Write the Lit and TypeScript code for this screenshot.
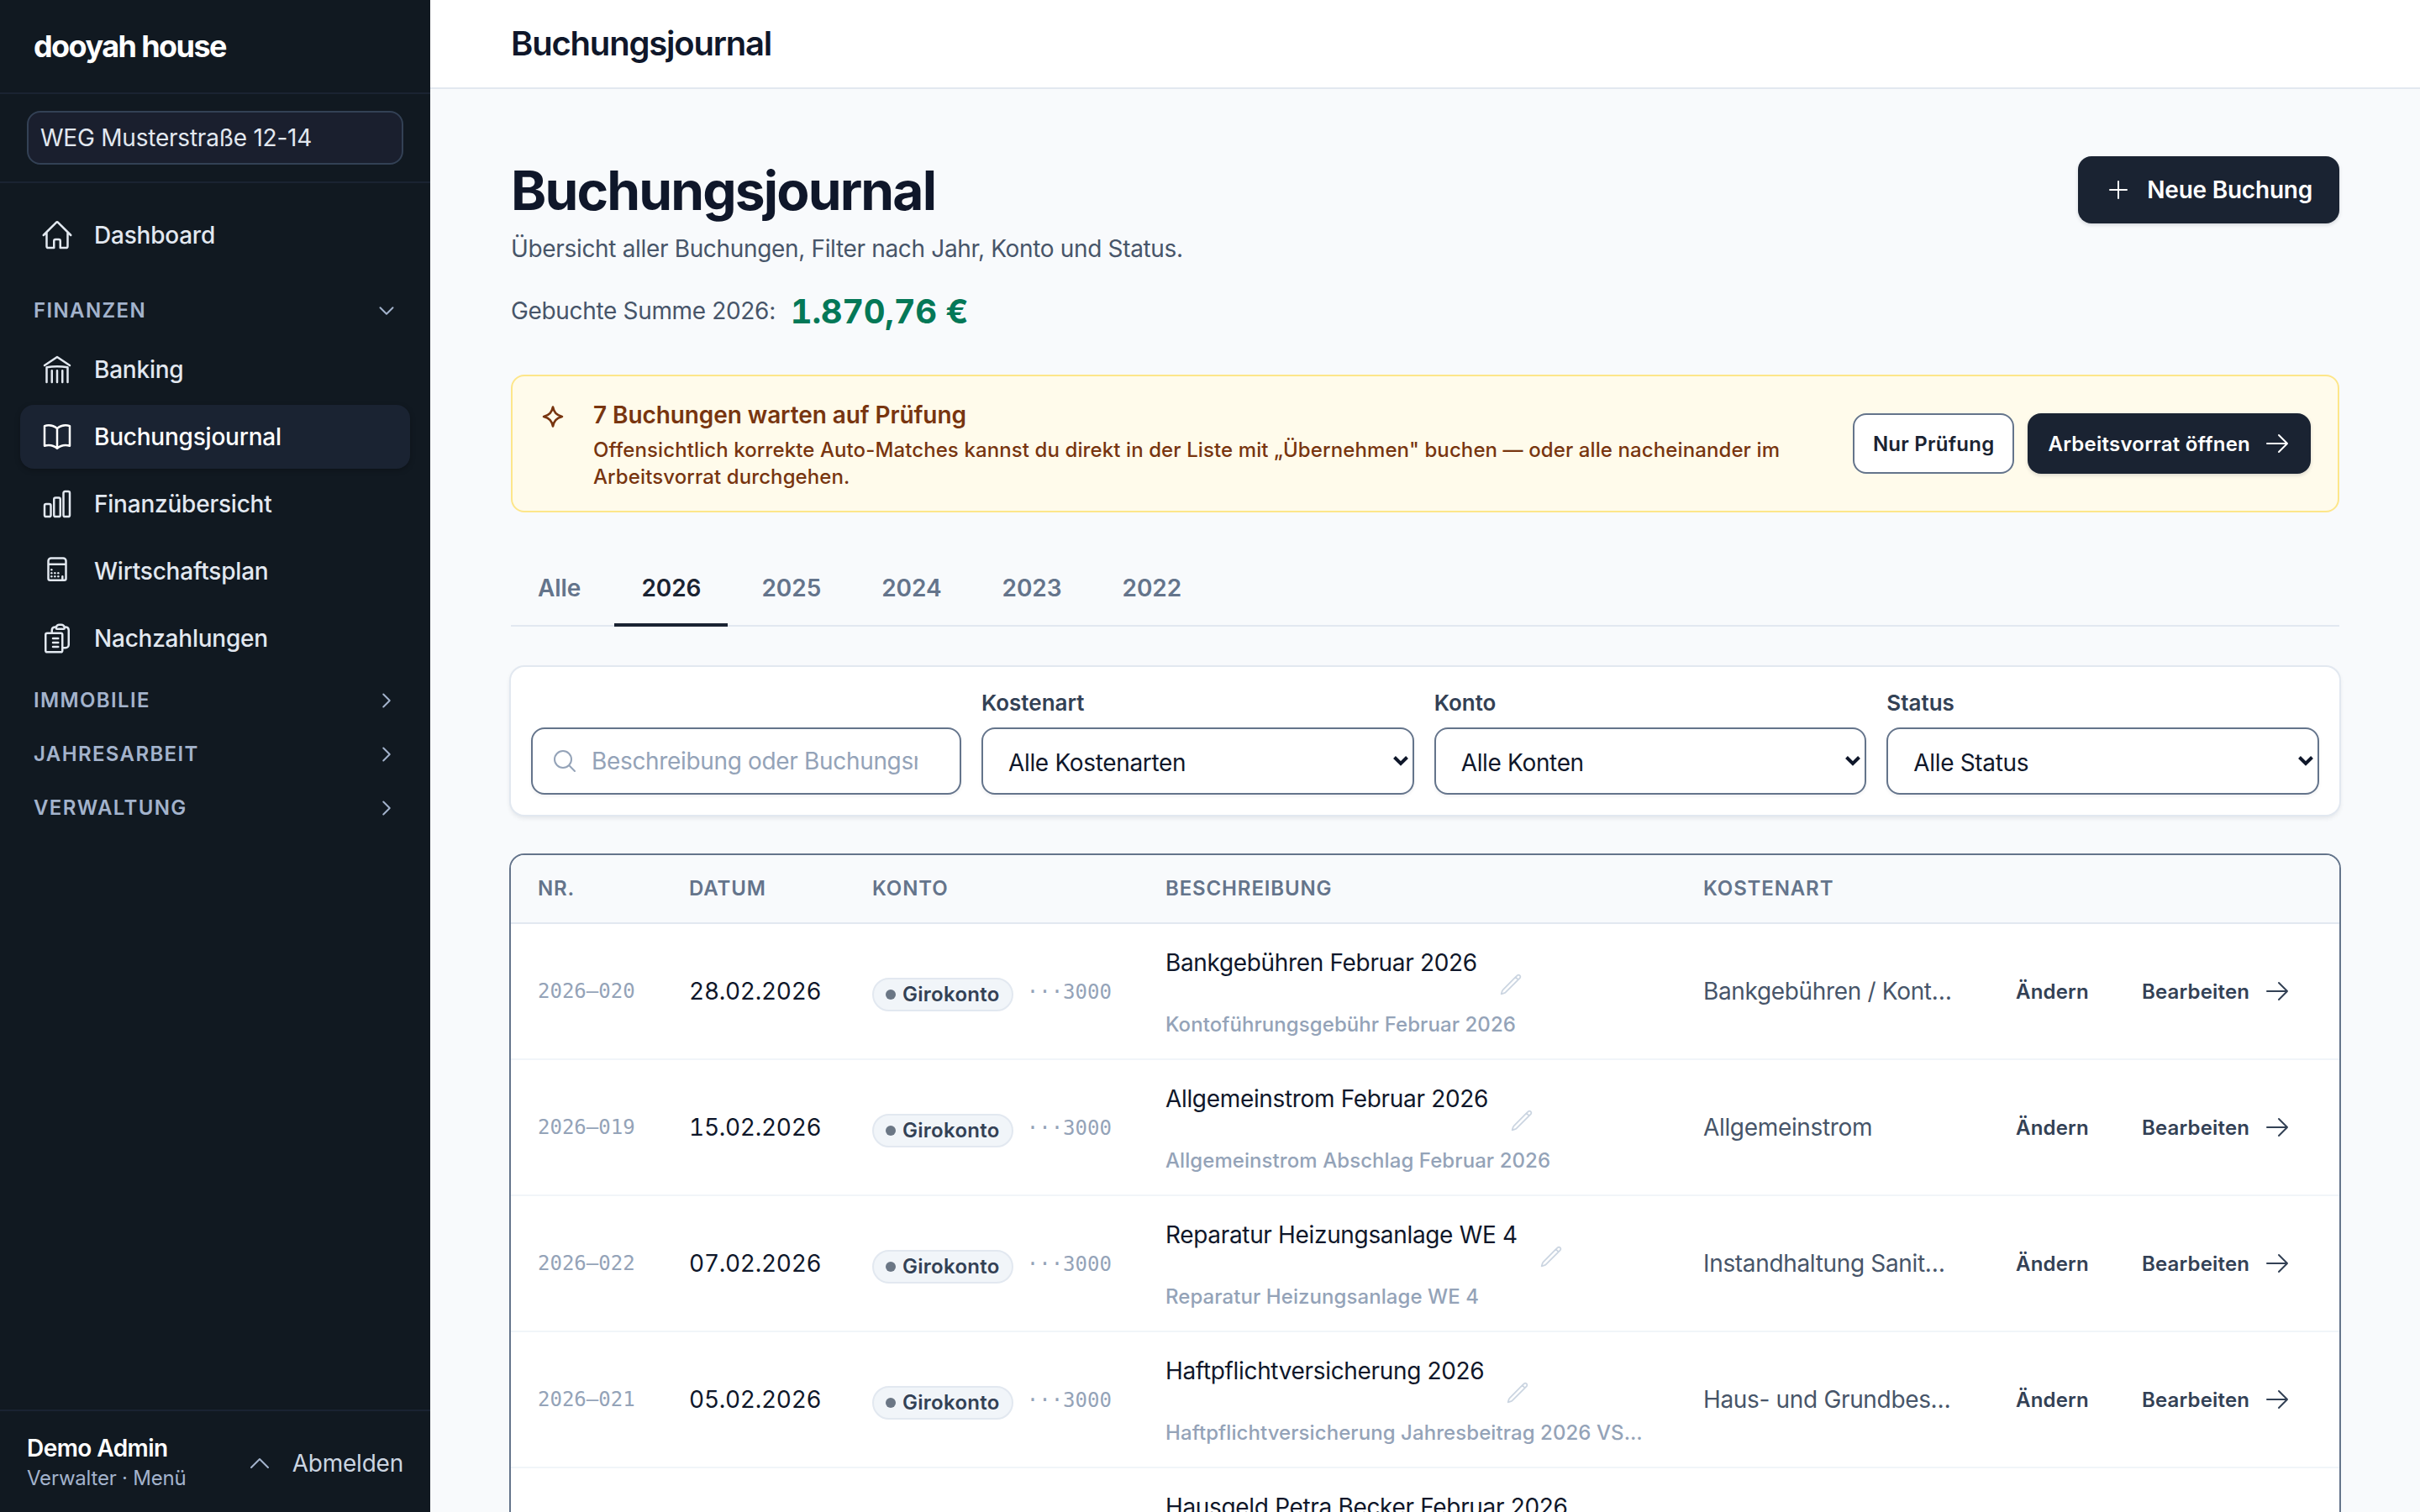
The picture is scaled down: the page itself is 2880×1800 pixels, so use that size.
import { LitElement, html, css, svg } from "lit";
import { customElement, property, state } from "lit/decorators.js";
import { classMap } from "lit/directives/class-map.js";

// Outline icons on a 24px grid
const ICONS: Record<string, string> = {
  home: "m2.25 12 8.954-8.955c.44-.439 1.152-.439 1.591 0L21.75 12M4.5 9.75v10.125c0 .621.504 1.125 1.125 1.125H9.75v-4.875c0-.621.504-1.125 1.125-1.125h2.25c.621 0 1.125.504 1.125 1.125V21h4.125c.621 0 1.125-.504 1.125-1.125V9.75",
  bank: "M12 21v-8.25M15.75 21v-8.25M8.25 21v-8.25M3 9l9-6 9 6m-1.5 12V10.332A48.36 48.36 0 0 0 12 9.75c-2.551 0-5.056.2-7.5.582V21",
  book: "M12 6.042A8.967 8.967 0 0 0 6 3.75c-1.052 0-2.062.18-3 .512v14.25A8.987 8.987 0 0 1 6 18c2.305 0 4.408.867 6 2.292m0-14.25a8.966 8.966 0 0 1 6-2.292c1.052 0 2.062.18 3 .512v14.25A8.987 8.987 0 0 0 18 18a8.967 8.967 0 0 0-6 2.292m0-14.25v14.25",
  chart:
    "M3 13.125C3 12.504 3.504 12 4.125 12h2.25c.621 0 1.125.504 1.125 1.125v6.75C7.5 20.496 6.996 21 6.375 21h-2.25A1.125 1.125 0 0 1 3 19.875v-6.75ZM9.75 8.625c0-.621.504-1.125 1.125-1.125h2.25c.621 0 1.125.504 1.125 1.125v11.25c0 .621-.504 1.125-1.125 1.125h-2.25a1.125 1.125 0 0 1-1.125-1.125V8.625ZM16.5 4.125c0-.621.504-1.125 1.125-1.125h2.25C20.496 3 21 3.504 21 4.125v15.75c0 .621-.504 1.125-1.125 1.125h-2.25a1.125 1.125 0 0 1-1.125-1.125V4.125Z",
  calculator:
    "M7.7 2.7h8.6a2 2 0 0 1 2 2v12.6a1.2 1.2 0 0 1-1.2 1.2H6.9a1.2 1.2 0 0 1-1.2-1.2V4.7a2 2 0 0 1 2-2ZM5.7 7h12.6M15.8 15.8v2",
  clipboard:
    "M9 12h3.75M9 15h3.75M9 18h3.75m3 .75H18a2.25 2.25 0 0 0 2.25-2.25V6.108c0-1.135-.845-2.098-1.976-2.192a48.424 48.424 0 0 0-1.123-.08m-5.801 0c-.065.21-.1.433-.1.664 0 .414.336.75.75.75h4.5a.75.75 0 0 0 .75-.75 2.25 2.25 0 0 0-.1-.664m-5.8 0A2.251 2.251 0 0 1 13.5 2.25H15c1.012 0 1.867.668 2.15 1.586m-5.8 0c-.376.023-.75.05-1.124.08C9.095 4.01 8.25 4.973 8.25 6.108V8.25m0 0H4.875c-.621 0-1.125.504-1.125 1.125v11.25c0 .621.504 1.125 1.125 1.125h9.75c.621 0 1.125-.504 1.125-1.125V9.375c0-.621-.504-1.125-1.125-1.125H8.25Z",
  down: "m19.5 8.25-7.5 7.5-7.5-7.5",
  right: "m8.25 4.5 7.5 7.5-7.5 7.5",
  up: "m4.5 15.75 7.5-7.5 7.5 7.5",
  plus: "M12 4.5v15m7.5-7.5h-15",
  arrow: "M13.5 4.5 21 12m0 0-7.5 7.5M21 12H3",
  search:
    "m21 21-5.197-5.197m0 0A7.5 7.5 0 1 0 5.196 5.196a7.5 7.5 0 0 0 10.607 10.607Z",
  spark:
    "M12 3.4c1 4.8 2.9 7.2 8.2 8.6-5.3 1.4-7.2 3.8-8.2 8.6-1-4.8-2.9-7.2-8.2-8.6 5.3-1.4 7.2-3.8 8.2-8.6Z",
  pencil:
    "m16.862 4.487 1.687-1.688a1.875 1.875 0 1 1 2.652 2.652L6.832 19.82a4.5 4.5 0 0 1-1.897 1.13l-2.685.8.8-2.685a4.5 4.5 0 0 1 1.13-1.897L16.863 4.487Zm0 0L19.5 7.125",
};

// Key dots of the calculator, they are filled instead of stroked
const CALCULATOR_KEYS = [
  [8, 11],
  [8, 13.4],
  [10.4, 13.4],
  [12.8, 13.4],
  [8, 15.8],
  [10.4, 15.8],
  [12.8, 15.8],
];

const FINANCE_ITEMS = [
  { icon: "bank", label: "Banking" },
  { icon: "book", label: "Buchungsjournal" },
  { icon: "chart", label: "Finanzübersicht" },
  { icon: "calculator", label: "Wirtschaftsplan" },
  { icon: "clipboard", label: "Nachzahlungen" },
];

const CLOSED_SECTIONS = ["Immobilie", "Jahresarbeit", "Verwaltung"];

const YEARS = ["Alle", "2026", "2025", "2024", "2023", "2022"];

const FILTERS = [
  { label: "Kostenart", value: "Alle Kostenarten" },
  { label: "Konto", value: "Alle Konten" },
  { label: "Status", value: "Alle Status" },
];

interface Booking {
  nr: string;
  date: string;
  title: string;
  note: string;
  category: string;
}

const BOOKINGS: Booking[] = [
  {
    nr: "2026–020",
    date: "28.02.2026",
    title: "Bankgebühren Februar 2026",
    note: "Kontoführungsgebühr Februar 2026",
    category: "Bankgebühren / Kont…",
  },
  {
    nr: "2026–019",
    date: "15.02.2026",
    title: "Allgemeinstrom Februar 2026",
    note: "Allgemeinstrom Abschlag Februar 2026",
    category: "Allgemeinstrom",
  },
  {
    nr: "2026–022",
    date: "07.02.2026",
    title: "Reparatur Heizungsanlage WE 4",
    note: "Reparatur Heizungsanlage WE 4",
    category: "Instandhaltung Sanit…",
  },
  {
    nr: "2026–021",
    date: "05.02.2026",
    title: "Haftpflichtversicherung 2026",
    note: "Haftpflichtversicherung Jahresbeitrag 2026 VS…",
    category: "Haus- und Grundbes…",
  },
  {
    nr: "2026–018",
    date: "03.02.2026",
    title: "Hausgeld Petra Becker Februar 2026",
    note: "Hausgeld Februar 2026",
    category: "Hausgeld",
  },
];

@customElement("ui-icon")
export class UiIcon extends LitElement {
  @property({ type: String }) public name = "";

  protected render() {
    return html`
      <svg viewBox="0 0 24 24" fill="none" stroke="currentColor">
        <path d=${ICONS[this.name]} />
        ${this.name === "calculator"
          ? CALCULATOR_KEYS.map(
              ([x, y]) => svg`<circle class="key" cx=${x} cy=${y} r="0.75" />`,
            )
          : ""}
      </svg>
    `;
  }

  static styles = css`
    :host {
      display: block;
      flex: none;
      width: 40px;
      height: 40px;
    }

    svg {
      display: block;
      width: 100%;
      height: 100%;
      stroke-width: var(--icon-stroke, 1.5);
      stroke-linecap: round;
      stroke-linejoin: round;
    }

    .key {
      fill: currentColor;
      stroke: none;
    }
  `;
}

@customElement("app-sidebar")
export class AppSidebar extends LitElement {
  @property({ type: String }) public active = "";

  private _item(icon: string, label: string) {
    return html`
      <a class=${classMap({ item: true, active: label === this.active })}>
        <ui-icon name=${icon}></ui-icon>
        <span>${label}</span>
      </a>
    `;
  }

  protected render() {
    return html`
      <div class="brand">dooyah house</div>
      <div class="property">
        <div class="property-select">WEG Musterstraße 12-14</div>
      </div>
      <nav>
        ${this._item("home", "Dashboard")}
        <div class="section open">
          <span>Finanzen</span>
          <ui-icon class="chevron" name="down"></ui-icon>
        </div>
        <div class="items">
          ${FINANCE_ITEMS.map((item) => this._item(item.icon, item.label))}
        </div>
        ${CLOSED_SECTIONS.map(
          (label) => html`
            <div class="section">
              <span>${label}</span>
              <ui-icon class="chevron" name="right"></ui-icon>
            </div>
          `,
        )}
      </nav>
      <footer>
        <div class="user">
          <div class="user-name">Demo Admin</div>
          <div class="user-role">Verwalter · Menü</div>
        </div>
        <ui-icon class="user-chevron" name="up"></ui-icon>
        <span class="logout">Abmelden</span>
      </footer>
    `;
  }

  static styles = css`
    :host {
      display: flex;
      flex-direction: column;
      flex: none;
      width: 512px;
      background: #111921;
      letter-spacing: -0.008em;
      color: #e2e8f0;
    }

    .brand {
      height: 110px;
      padding-left: 40px;
      border-bottom: 2px solid #1a2332;
      font-size: 36px;
      font-weight: 700;
      line-height: 110px;
      letter-spacing: -0.044em;
      color: #fff;
    }

    .property {
      padding: 20px 32px;
      border-bottom: 2px solid #1a2332;
    }

    .property-select {
      box-sizing: border-box;
      height: 64px;
      padding: 0 14px;
      border: 2px solid #334155;
      border-radius: 16px;
      background: #1a1f2e;
      line-height: 60px;
    }

    nav {
      flex: 1;
      padding: 24px 24px 0;
    }

    .item {
      display: flex;
      align-items: center;
      gap: 24px;
      height: 76px;
      padding: 0 24px;
      border-radius: 16px;
      font-weight: 500;
    }

    .item.active {
      background: #1a2332;
      color: #fff;
      box-shadow: 0 2px 6px rgba(0, 0, 0, 0.25);
    }

    .items {
      display: flex;
      flex-direction: column;
      gap: 4px;
      margin-bottom: 4px;
    }

    .section {
      display: flex;
      align-items: center;
      justify-content: space-between;
      height: 64px;
      padding: 0 16px;
      font-size: 24px;
      font-weight: 600;
      letter-spacing: 0.057em;
      text-transform: uppercase;
      color: #a3b3cc;
    }

    .section span {
      padding-bottom: 2px;
    }

    .section.open {
      margin-top: 20px;
    }

    .chevron {
      width: 24px;
      height: 24px;
      --icon-stroke: 2;
    }

    footer {
      display: flex;
      align-items: center;
      box-sizing: border-box;
      height: 122px;
      padding: 4px 32px 0;
      border-top: 2px solid #1a2332;
    }

    .user {
      flex: 1;
    }

    .user-name {
      font-weight: 600;
      line-height: 34px;
      letter-spacing: -0.02em;
      color: #fff;
    }

    .user-role {
      padding-top: 2px;
      font-size: 24px;
      line-height: 34px;
      color: #a3b3cc;
    }

    .user-chevron {
      width: 32px;
      height: 32px;
      margin-right: 23px;
      color: #a3b3cc;
    }

    .logout {
      color: #cbd5e1;
    }
  `;
}

@customElement("booking-table")
export class BookingTable extends LitElement {
  @property({ attribute: false }) public bookings: Booking[] = [];

  private _row(booking: Booking) {
    return html`
      <div class="row">
        <div class="nr">${booking.nr}</div>
        <div class="date">${booking.date}</div>
        <div class="account">
          <span class="pill"><i class="dot"></i>Girokonto</span>
          <span class="iban">···3000</span>
        </div>
        <div>
          <div class="title">
            <span>${booking.title}</span>
            <span class="edit"><ui-icon name="pencil"></ui-icon></span>
          </div>
          <div class="note">${booking.note}</div>
        </div>
        <div class="category">${booking.category}</div>
        <div class="action">Ändern</div>
        <div class="action">
          Bearbeiten
          <ui-icon class="arrow" name="arrow"></ui-icon>
        </div>
      </div>
    `;
  }

  protected render() {
    return html`
      <div class="head">
        <div>Nr.</div>
        <div>Datum</div>
        <div>Konto</div>
        <div>Beschreibung</div>
        <div>Kostenart</div>
      </div>
      ${this.bookings.map((booking) => this._row(booking))}
    `;
  }

  static styles = css`
    :host {
      display: block;
      overflow: hidden;
      border-radius: 16px;
      background: #fff;
      box-shadow: 0 0 0 2px #64748b;
      white-space: nowrap;
    }

    .head,
    .row {
      display: grid;
      grid-template-columns: 180px 218px 349px 640px 372px 150px 1fr;
      align-items: center;
      padding: 0 32px;
    }

    .head {
      box-sizing: border-box;
      height: 82px;
      padding-bottom: 2px;
      border-bottom: 2px solid #e2e8f0;
      background: #f8fafc;
      font-size: 24px;
      font-weight: 600;
      letter-spacing: 0.036em;
      text-transform: uppercase;
      color: #64748b;
    }

    .row {
      height: 160px;
      border-bottom: 2px solid #f1f5f9;
      color: #0f172a;
    }

    .nr,
    .iban {
      font-family: "DejaVu Sans Mono", monospace;
      font-size: 24px;
      letter-spacing: 0;
      color: #94a3b8;
    }

    .date {
      font-variant-numeric: tabular-nums;
      letter-spacing: -0.01em;
    }

    .account {
      display: flex;
      align-items: center;
      gap: 16px;
      padding-top: 8px;
    }

    .pill {
      display: flex;
      align-items: center;
      gap: 8px;
      box-sizing: border-box;
      height: 40px;
      padding: 0 14px 1px;
      border: 2px solid #e2e8f0;
      border-radius: 20px;
      background: #f1f5f9;
      font-size: 24px;
      font-weight: 600;
      letter-spacing: 0.012em;
      color: #334155;
    }

    .dot {
      width: 12px;
      height: 12px;
      border-radius: 50%;
      background: #6b7785;
    }

    .iban {
      padding-bottom: 6px;
    }

    .title {
      display: flex;
      align-items: flex-start;
      gap: 16px;
      height: 72px;
      line-height: 44px;
    }

    .edit {
      display: grid;
      place-items: center;
      align-self: flex-end;
      width: 48px;
      height: 48px;
      color: #cbd5e1;
    }

    .edit ui-icon {
      width: 28px;
      height: 28px;
    }

    .note {
      margin-top: 8px;
      font-size: 24px;
      font-weight: 500;
      line-height: 32px;
      letter-spacing: 0.003em;
      color: #94a3b8;
    }

    .category {
      color: #475569;
    }

    .action {
      display: flex;
      align-items: center;
      gap: 17px;
      font-size: 24px;
      font-weight: 600;
      letter-spacing: 0.007em;
      color: #334155;
    }

    .arrow {
      width: 32px;
      height: 32px;
    }
  `;
}

@customElement("app-root")
export class AppRoot extends LitElement {
  @state() private _year = "2026";

  private _renderHeading() {
    return html`
      <div class="heading">
        <div>
          <h1>Buchungsjournal</h1>
          <p class="subtitle">
            Übersicht aller Buchungen, Filter nach Jahr, Konto und Status.
          </p>
          <p class="sum">Gebuchte Summe 2026: <strong>1.870,76 €</strong></p>
        </div>
        <button class="primary large">
          <ui-icon name="plus"></ui-icon>Neue Buchung
        </button>
      </div>
    `;
  }

  private _renderNotice() {
    return html`
      <section class="notice">
        <ui-icon class="spark" name="spark"></ui-icon>
        <div class="notice-text">
          <h2>7 Buchungen warten auf Prüfung</h2>
          <p>
            Offensichtlich korrekte Auto-Matches kannst du direkt in der Liste
            mit „Übernehmen" buchen — oder alle nacheinander im<br />Arbeitsvorrat
            durchgehen.
          </p>
        </div>
        <button class="secondary">Nur Prüfung</button>
        <button class="primary">
          Arbeitsvorrat öffnen<ui-icon name="arrow"></ui-icon>
        </button>
      </section>
    `;
  }

  private _renderFilters() {
    return html`
      <section class="filters">
        <div class="field search">
          <ui-icon name="search"></ui-icon>
          <span>Beschreibung oder Buchungsnummer</span>
        </div>
        ${FILTERS.map(
          (filter) => html`
            <div>
              <div class="label">${filter.label}</div>
              <div class="field select">
                <span>${filter.value}</span>
                <svg class="caret" viewBox="0 0 20 14">
                  <path d="M2.5 2.5 10 10l7.5-7.5" />
                </svg>
              </div>
            </div>
          `,
        )}
      </section>
    `;
  }

  protected render() {
    return html`
      <app-sidebar active="Buchungsjournal"></app-sidebar>
      <div class="page">
        <header>Buchungsjournal</header>
        <main>
          ${this._renderHeading()} ${this._renderNotice()}
          <div class="tabs">
            ${YEARS.map(
              (year) => html`
                <div
                  class=${classMap({ tab: true, active: year === this._year })}
                  @click=${() => (this._year = year)}
                >
                  ${year}
                </div>
              `,
            )}
          </div>
          ${this._renderFilters()}
          <booking-table .bookings=${BOOKINGS}></booking-table>
        </main>
      </div>
    `;
  }

  static styles = css`
    :host {
      display: flex;
      height: 1800px;
      overflow: hidden;
      background: #f8fafc;
      font-family: Inter, "Liberation Sans", sans-serif;
      font-size: 28px;
      letter-spacing: -0.012em;
      color: #0f172a;
    }

    .page {
      flex: 1;
      min-width: 0;
    }

    header {
      height: 104px;
      padding-left: 96px;
      border-bottom: 2px solid #e2e8f0;
      background: #fff;
      font-size: 40px;
      font-weight: 600;
      line-height: 104px;
      letter-spacing: -0.03em;
    }

    main {
      padding: 80px 96px 0;
    }

    h1,
    h2,
    p {
      margin: 0;
    }

    .heading {
      display: flex;
      align-items: flex-start;
      justify-content: space-between;
    }

    h1 {
      font-size: 64px;
      font-weight: 700;
      line-height: 82px;
      letter-spacing: -0.029em;
    }

    .subtitle {
      margin-top: 6px;
      line-height: 44px;
      color: #475569;
    }

    .sum {
      display: flex;
      align-items: center;
      gap: 18px;
      height: 56px;
      margin-top: 24px;
      color: #475569;
    }

    .sum strong {
      font-size: 40px;
      font-weight: 700;
      font-variant-numeric: tabular-nums;
      color: #047857;
    }

    button {
      display: flex;
      align-items: center;
      box-sizing: border-box;
      height: 72px;
      padding: 0 24px;
      border: none;
      border-radius: 16px;
      font: 600 24px Inter, "Liberation Sans", sans-serif;
      letter-spacing: 0.01em;
      white-space: nowrap;
    }

    button ui-icon {
      width: 32px;
      height: 32px;
    }

    .primary {
      gap: 16px;
      background: #1a2332;
      color: #fff;
      box-shadow: 0 2px 4px rgba(15, 23, 42, 0.15);
    }

    .secondary {
      padding: 0 22px;
      border: 2px solid #64748b;
      background: #fff;
      color: #1a2332;
    }

    .large {
      gap: 18px;
      height: 80px;
      padding: 0 32px;
      font-size: 28px;
      letter-spacing: -0.008em;
    }

    .notice {
      display: flex;
      align-items: center;
      gap: 16px;
      margin-top: 48px;
      padding: 24px 32px;
      border: 2px solid #fde68a;
      border-radius: 16px;
      background: #fffbeb;
      color: #78350f;
    }

    .spark {
      align-self: flex-start;
      width: 32px;
      height: 32px;
      margin: 8px 16px 0 0;
      --icon-stroke: 2;
    }

    .notice-text {
      flex: 1;
      white-space: nowrap;
    }

    h2 {
      font-size: 28px;
      font-weight: 600;
      line-height: 44px;
      letter-spacing: -0.003em;
    }

    .notice p {
      margin-top: 4px;
      font-size: 24px;
      font-weight: 500;
      line-height: 32px;
      letter-spacing: 0.0042em;
    }

    .tabs {
      display: flex;
      gap: 8px;
      margin-top: 48px;
      box-shadow: inset 0 -2px #e2e8f0;
    }

    .tab {
      padding: 0 32px;
      border-bottom: 4px solid transparent;
      font-weight: 600;
      line-height: 84px;
      letter-spacing: -0.002em;
      color: #64748b;
    }

    .tab.active {
      border-color: #1a2332;
      color: #1a2332;
    }

    .filters {
      display: grid;
      grid-template-columns: 512px 1fr 1fr 1fr;
      align-items: end;
      gap: 24px;
      margin: 48px 0;
      padding: 24px;
      border-radius: 16px;
      background: #fff;
      box-shadow:
        0 0 0 2px #e2e8f0,
        0 3px 6px rgba(15, 23, 42, 0.12);
    }

    .label {
      margin-bottom: 11px;
      padding-top: 1px;
      font-size: 26px;
      font-weight: 600;
      line-height: 36px;
      letter-spacing: 0;
      color: #334155;
    }

    .field {
      display: flex;
      align-items: center;
      box-sizing: border-box;
      height: 80px;
      border: 2px solid #64748b;
      border-radius: 16px;
      background: #fff;
      box-shadow: 0 2px 4px rgba(15, 23, 42, 0.06);
      white-space: nowrap;
    }

    .search {
      gap: 16px;
      padding: 0 50px 0 22px;
      color: #94a3b8;
    }

    .search ui-icon {
      width: 32px;
      height: 32px;
    }

    .search span {
      overflow: hidden;
    }

    .select {
      justify-content: space-between;
      padding: 0 4px 0 30px;
    }

    .select span {
      padding-top: 3px;
    }

    .caret {
      width: 20px;
      height: 14px;
      fill: none;
      stroke: #0f172a;
      stroke-width: 4;
    }
  `;
}
